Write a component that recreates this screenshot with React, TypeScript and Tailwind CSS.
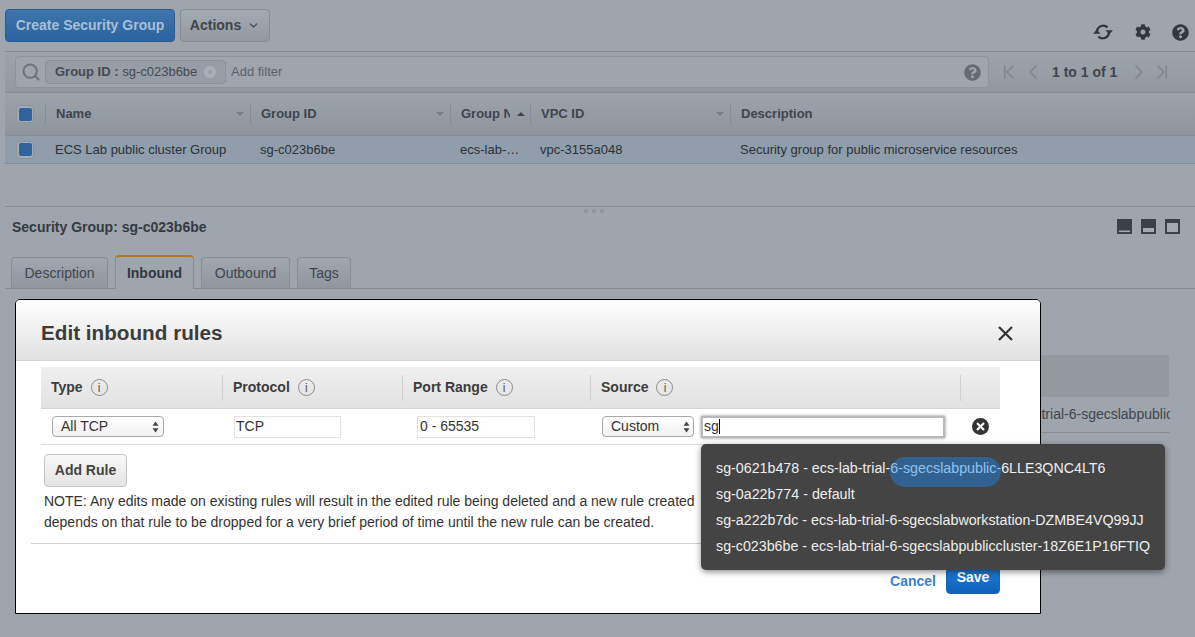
import { ChevronDown, Search, X } from 'lucide-react'
import { FaCog, FaQuestionCircle } from 'react-icons/fa'

const columns = [
  { label: 'Name', width: 'w-[205px]', arrow: 'down' },
  { label: 'Group ID', width: 'w-[200px]', arrow: 'down' },
  { label: 'Group N', width: 'w-[80px]', arrow: 'up' },
  { label: 'VPC ID', width: 'w-[200px]', arrow: 'down' },
  { label: 'Description', width: 'flex-1', arrow: '' },
]

const suggestions = [
  { id: 'sg-0a22b774', name: 'default' },
  { id: 'sg-a222b7dc', name: 'ecs-lab-trial-6-sgecslabworkstation-DZMBE4VQ99JJ' },
  { id: 'sg-c023b6be', name: 'ecs-lab-trial-6-sgecslabpubliccluster-18Z6E1P16FTIQ' },
]

function Checkbox() {
  return (
    <div className="w-[18px] h-[18px] rounded-[4px] border border-[#8b929a] bg-[#a3aab2] flex items-center justify-center">
      <div className="w-[13px] h-[13px] rounded-[2px] bg-[#2f64a0]" />
    </div>
  )
}

function InfoIcon() {
  return (
    <span className="inline-flex w-[17px] h-[17px] rounded-full border border-[#8a8a8a] items-center justify-center text-[12px] font-normal text-[#555] ml-[8px]">
      i
    </span>
  )
}

function SelectArrows() {
  return (
    <svg width="7" height="12" viewBox="0 0 7 12">
      <path d="M3.5 0.5 L6.5 4.8 H0.5 Z M3.5 11.5 L0.5 7.2 H6.5 Z" fill="#444" />
    </svg>
  )
}

function PanelIcon({ kind }: { kind: number }) {
  return (
    <svg width="15" height="15" viewBox="0 0 15 15">
      <rect width="15" height="15" fill="#3a4148" />
      {kind === 0 && <rect x="2" y="11.5" width="11" height="1.5" fill="#a3aab2" />}
      {kind === 1 && <rect x="2" y="9" width="11" height="4" fill="#a3aab2" />}
      {kind === 2 && <rect x="2" y="4" width="11" height="9" fill="#a3aab2" />}
    </svg>
  )
}

function Tab({ label, width }: { label: string; width: string }) {
  return (
    <div className={`${width} h-[31px] rounded-t-[4px] border border-b-0 border-[#868d95] bg-gradient-to-b from-[#a0a7af] to-[#8f969e] flex items-center justify-center text-[14px] text-[#3f454c]`}>
      {label}
    </div>
  )
}

export default function App() {
  return (
    <div className="relative w-[1195px] h-[637px] overflow-hidden bg-[#9ea5ad] font-['Liberation_Sans',Arial,sans-serif] text-[#33383e]">
      {/* toolbar */}
      <div className="h-[51px] pl-[5px] pt-[9px] pr-[6px] flex items-start gap-[5px]">
        <div className="w-[170px] h-[33px] rounded-[4px] border border-[#2a5a8e] bg-gradient-to-b from-[#3f75ad] to-[#2a639f] text-[#a9bfd6] text-[14px] font-bold flex items-center justify-center">
          Create Security Group
        </div>
        <div className="w-[90px] h-[33px] rounded-[4px] border border-[#858c94] bg-gradient-to-b from-[#a3aab2] to-[#93999f] text-[#3f454c] text-[14px] font-bold flex items-center justify-center gap-[6px]">
          Actions
          <ChevronDown size={13} strokeWidth={2.2} />
        </div>
        <div className="ml-auto mt-[14px] flex items-center gap-[21px] text-[#32383e]">
          <svg width="22" height="18" viewBox="0 0 22 18" fill="none" stroke="#32383e" strokeWidth="2.2">
            <path d="M5 8 A6.3 6.3 0 0 1 15.6 4.4" />
            <path d="M17 10 A6.3 6.3 0 0 1 6.4 13.6" />
            <path d="M13.5 7.2 H21 L17.2 11.6 Z M1 10.8 H8.5 L4.8 6.4 Z" fill="#32383e" stroke="none" />
          </svg>
          <FaCog size={16} />
          <FaQuestionCircle size={17} />
        </div>
      </div>

      {/* filter bar */}
      <div className="ml-[5px] h-[42px] border-t border-b border-[#858c94] bg-gradient-to-b from-[#9ca3ab] to-[#92999f] flex items-center pl-[10px]">
        <div className="w-[974px] h-[32px] rounded-[4px] border border-[#8d949c] bg-[#9ea5ad] flex items-center pl-[5px] pr-[7px]">
          <Search size={20} strokeWidth={2.4} className="text-[#6d747c]" />
          <div className="ml-[4px] h-[24px] w-[181px] rounded-[4px] border border-[#8a9199] bg-[#969da5] flex items-center pl-[9px] text-[13px] whitespace-nowrap text-[#444a51]">
            <b>Group ID :</b>&nbsp;sg-c023b6be
            <span className="ml-[7px] w-[12px] h-[12px] rounded-full bg-[#a9b0b7] flex items-center justify-center">
              <X size={8} className="text-[#8b9299]" strokeWidth={3} />
            </span>
          </div>
          <span className="ml-[5px] text-[13px] text-[#5b6269]">Add filter</span>
          <FaQuestionCircle size={17} className="ml-auto text-[#646b73]" />
        </div>
        <div className="ml-[15px] flex items-center text-[#7b828a]">
          <svg width="10" height="14" viewBox="0 0 10 14" fill="none" stroke="currentColor" strokeWidth="1.3">
            <path d="M0.7 0.5 V13.5 M9.5 0.5 L3 7 L9.5 13.5" />
          </svg>
          <svg width="8" height="14" viewBox="0 0 8 14" fill="none" stroke="currentColor" strokeWidth="1.3" className="ml-[15px]">
            <path d="M7.5 0.5 L1 7 L7.5 13.5" />
          </svg>
          <span className="ml-[15px] text-[14px] font-bold text-[#3f454c] whitespace-nowrap">1 to 1 of 1</span>
          <svg width="8" height="14" viewBox="0 0 8 14" fill="none" stroke="currentColor" strokeWidth="1.3" className="ml-[18px]">
            <path d="M0.5 0.5 L7 7 L0.5 13.5" />
          </svg>
          <svg width="10" height="14" viewBox="0 0 10 14" fill="none" stroke="currentColor" strokeWidth="1.3" className="ml-[14px]">
            <path d="M9.3 0.5 V13.5 M0.5 0.5 L7 7 L0.5 13.5" />
          </svg>
        </div>
      </div>

      {/* table */}
      <div className="ml-[5px] h-[43px] border-b border-[#868d95] bg-gradient-to-b from-[#9ca3ab] to-[#8e959d] flex items-center text-[13px] font-bold text-[#3f454c]">
        <div className="w-[40px] flex justify-center">
          <Checkbox />
        </div>
        {columns.map((col) => (
          <div key={col.label} className={`${col.width} h-[21px] border-l border-[#868d95] pl-[10px] pr-[5px] flex items-center justify-between`}>
            <span className={col.arrow === 'up' ? 'w-[49px] overflow-hidden whitespace-nowrap' : ''}>{col.label}</span>
            {col.arrow === 'down' && <span className="mr-[1px] border-x-[4px] border-x-transparent border-t-[4px] border-t-[#777e86]" />}
            {col.arrow === 'up' && <span className="border-x-[4px] border-x-transparent border-b-[4px] border-b-[#3f454c]" />}
          </div>
        ))}
      </div>
      <div className="ml-[5px] h-[28px] border-b border-[#868d95] bg-[#909dab] flex items-center text-[13px] text-[#2c3136]">
        <div className="w-[40px] flex justify-center">
          <Checkbox />
        </div>
        <div className="w-[205px] pl-[10px]">ECS Lab public cluster Group</div>
        <div className="w-[200px] pl-[10px]">sg-c023b6be</div>
        <div className="w-[80px] pl-[10px]">ecs-lab-…</div>
        <div className="w-[200px] pl-[10px]">vpc-3155a048</div>
        <div className="flex-1 pl-[10px]">Security group for public microservice resources</div>
      </div>

      {/* details panel */}
      <div className="ml-[5px] mt-[42px] border-t border-[#858c94] relative">
        <div className="absolute top-0 left-[579px] flex gap-[4px] mt-[2px]">
          <span className="w-[4px] h-[4px] rounded-full border border-[#868d95]" />
          <span className="w-[4px] h-[4px] rounded-full border border-[#868d95]" />
          <span className="w-[4px] h-[4px] rounded-full border border-[#868d95]" />
        </div>
        <div className="h-[48px] pl-[7px] pr-[15px] flex items-center justify-between">
          <span className="text-[14px] font-bold text-[#343a40] mt-[-8px]">Security Group: sg-c023b6be</span>
          <div className="flex gap-[9px] mt-[-10px]">
            <PanelIcon kind={0} />
            <PanelIcon kind={1} />
            <PanelIcon kind={2} />
          </div>
        </div>
        <div className="h-[34px] border-b border-[#858c94] pl-[6px] flex items-end gap-[7px]">
          <Tab label="Description" width="w-[97px]" />
          <div className="w-[79px] h-[34px] -mb-[1px] rounded-t-[4px] border-x border-[#868d95] border-t-2 border-t-[#b07a26] bg-[#9ea5ad] flex items-center justify-center text-[14px] font-bold text-[#33383e]">
            Inbound
          </div>
          <Tab label="Outbound" width="w-[89px]" />
          <Tab label="Tags" width="w-[54px]" />
        </div>
        {/* table behind the modal */}
        <div className="ml-[10px] w-[1154px] mt-[66px] h-[42px] bg-[#92999f]" />
        <div className="ml-[10px] w-[1155px] h-[36px] border-b border-[#868d95] flex items-center justify-end overflow-hidden whitespace-nowrap text-[14px] text-[#3f454c]">
          <span className="-mr-[3px]">sg-c023b6be - ecs-lab-trial-6-sgecslabpublic</span>
        </div>
      </div>

      {/* modal */}
      <div className="absolute left-[15px] top-[299px] w-[1026px] h-[315px] bg-white border border-black rounded-t-[5px]">
        <div className="h-[61px] rounded-t-[4px] border-b border-[#d4d4d4] bg-gradient-to-b from-white to-[#e1e1e1] flex items-center justify-between pl-[25px] pr-[27px]">
          <h2 className="text-[20.7px] font-bold text-[#3c3c3c] mt-[6px]">Edit inbound rules</h2>
          <svg width="15" height="15" viewBox="0 0 15 15" fill="none" stroke="#333" strokeWidth="2.2" className="mt-[7px]">
            <path d="M1 1 L14 14 M14 1 L1 14" />
          </svg>
        </div>

        <div className="ml-[25px] w-[959px] mt-[6px]">
          <div className="h-[42px] border-b border-[#d5d5d5] bg-gradient-to-b from-[#efefef] to-[#e2e2e2] flex items-center text-[14px] font-bold text-[#3c3c3c]">
            <div className="w-[181px] pl-[10px] flex items-center">Type<InfoIcon /></div>
            <div className="w-[180px] h-[26px] pl-[10px] border-l border-[#d0d0d0] flex items-center">Protocol<InfoIcon /></div>
            <div className="w-[188px] h-[26px] pl-[10px] border-l border-[#d0d0d0] flex items-center">Port Range<InfoIcon /></div>
            <div className="w-[370px] h-[26px] pl-[10px] border-l border-[#d0d0d0] flex items-center">Source<InfoIcon /></div>
            <div className="h-[26px] border-l border-[#d0d0d0]" />
          </div>
          <div className="h-[36px] border-b border-[#dcdcdc] flex items-center text-[14px] text-[#333]">
            <div className="ml-[11px] w-[112px] h-[21px] rounded-[4px] border border-[#a8a8a8] bg-gradient-to-b from-white to-[#f1f1f1] flex items-center justify-between pl-[8px] pr-[4px]">
              All TCP
              <SelectArrows />
            </div>
            <div className="ml-[70px] w-[107px] h-[22px] border border-[#e2e2e2] flex items-center pl-[1px]">TCP</div>
            <div className="ml-[76px] w-[118px] h-[22px] border border-[#e2e2e2] flex items-center pl-[2px]">0 - 65535</div>
            <div className="ml-[67px] w-[92px] h-[21px] rounded-[4px] border border-[#a8a8a8] bg-gradient-to-b from-white to-[#f1f1f1] flex items-center justify-between pl-[8px] pr-[3px]">
              Custom
              <SelectArrows />
            </div>
            <div className="ml-[7px] w-[244px] h-[22px] border-2 border-[#b9b9b9] shadow-[0_0_3px_#888] flex items-center pl-[1px]">
              sg<span className="w-px h-[15px] bg-black" />
            </div>
            <span className="ml-[27px] w-[17px] h-[17px] rounded-full bg-[#333] flex items-center justify-center">
              <svg width="9" height="9" viewBox="0 0 9 9" fill="none" stroke="white" strokeWidth="2.2">
                <path d="M1 1 L8 8 M8 1 L1 8" />
              </svg>
            </span>
          </div>
        </div>

        <div className="ml-[28px] mt-[9px] w-[83px] h-[33px] rounded-[4px] border border-[#c4c4c4] bg-gradient-to-b from-[#f8f8f8] to-[#e4e4e4] flex items-center justify-center text-[14px] font-bold text-[#444]">
          Add Rule
        </div>
        <div className="ml-[28px] mt-[4px] w-[900px] text-[14px] leading-[21px] text-[#333] h-[42px] overflow-hidden">
          NOTE: Any edits made on existing rules will result in the edited rule being deleted and a new rule created<br />
          depends on that rule to be dropped for a very brief period of time until the new rule can be created.
        </div>
        <div className="ml-[15px] mt-[10px] border-t border-[#d2d2d2]" />
        <div className="flex justify-end items-start mr-[40px] mt-[20px]">
          <span className="mt-[7px] mr-[10px] text-[14px] font-bold text-[#3b7fd9]">Cancel</span>
          <div className="w-[54px] h-[27px] rounded-[4px] border border-[#1d66b5] bg-gradient-to-b from-[#1e7bd6] to-[#0f62b8] text-white text-[14px] font-bold text-center leading-[18px] mt-[3px]">
            Save
          </div>
        </div>

        {/* autocomplete */}
        <div className="absolute left-[685px] top-[144px] w-[464px] h-[126px] rounded-[5px] bg-[#444444] shadow-[0_2px_6px_rgba(0,0,0,0.45)] pt-[11px] pl-[15px] text-[14.25px] leading-[26px] text-[#eeeeee] whitespace-nowrap">
          <div className="h-[26px] flex">
            sg-0621b478 - ecs-lab-trial-
            <span className="h-[30px] mt-[2px] leading-[22px] rounded-full bg-[#33618f] text-[#8fc1f0]">6-sgecslabpublic-</span>
            6LLE3QNC4LT6
          </div>
          {suggestions.map((item) => (
            <div key={item.id} className="h-[26px]">
              {item.id} - {item.name}
            </div>
          ))}
        </div>
      </div>
    </div>
  )
}
